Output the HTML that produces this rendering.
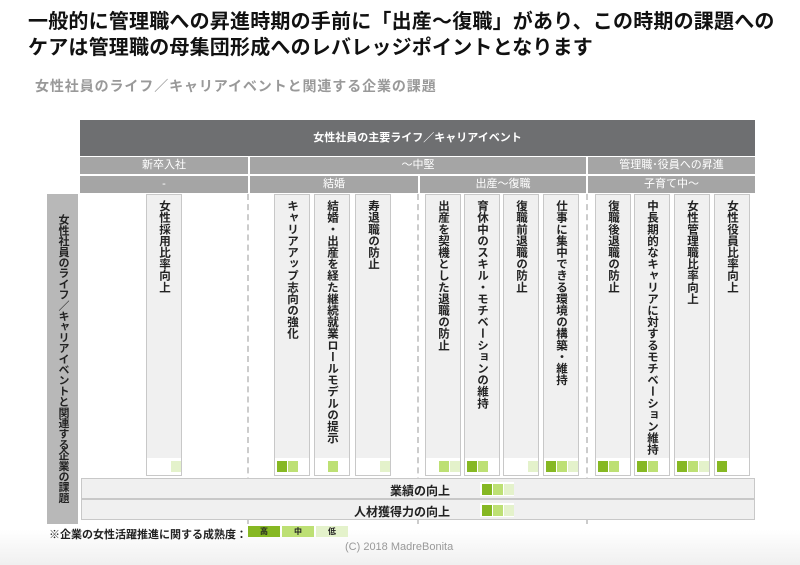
<!DOCTYPE html>
<html><head><meta charset="utf-8">
<style>
*{margin:0;padding:0;box-sizing:border-box}
body{width:800px;height:565px;background:linear-gradient(#fff 0,#fff 530px,#f0f0f0 565px);font-family:"Liberation Sans","Noto Sans CJK JP",sans-serif;position:relative;overflow:hidden}
.a{position:absolute}
.t{left:28px;font-size:20px;font-weight:bold;letter-spacing:0.2px;white-space:nowrap;color:#111;line-height:24px}
.sub{left:35px;top:76px;font-size:14px;font-weight:bold;color:#999;letter-spacing:0.9px;white-space:nowrap}
.hd{background:#6e6f71;color:#fff;font-size:11px;font-weight:bold;text-align:center}
.h2{background:#a5a5a5;color:#fff;font-size:11px;text-align:center;line-height:17px}
.card{top:194px;width:36px;height:282px;border:1px solid #c8c8c8;background:#f0f0f0}
.card .v{writing-mode:vertical-rl;font-size:11.5px;line-height:14px;font-weight:bold;color:#222;position:absolute;top:5px;left:10px;white-space:nowrap;letter-spacing:0.1px}
.card .w{position:absolute;left:0;right:0;bottom:0;height:17px;background:#fff}
.sq{position:absolute;top:3px;width:10px;height:11px}
.h{background:#86b823}.m{background:#bde074}.l{background:#e4f2cb}
.dash{top:194px;height:330px;border-left:2px dashed #ccc}
.bar{left:81px;width:674px;height:21px;background:#f0f0f0;border:1px solid #c8c8c8;font-size:12px;font-weight:bold;color:#222}
</style></head><body>
<div class="a t" style="top:10px">一般的に管理職への昇進時期の手前に「出産～復職」があり、この時期の課題への</div>
<div class="a t" style="top:36px">ケアは管理職の母集団形成へのレバレッジポイントとなります</div>
<div class="a sub">女性社員のライフ／キャリアイベントと関連する企業の課題</div>

<div class="a hd" style="left:80px;top:120px;width:675px;height:36px;line-height:36px">女性社員の主要ライフ／キャリアイベント</div>
<div class="a h2" style="left:80px;top:157px;width:168px">新卒入社</div>
<div class="a h2" style="left:250px;top:157px;width:336px">～中堅</div>
<div class="a h2" style="left:588px;top:157px;width:167px">管理職･役員への昇進</div>
<div class="a h2" style="left:80px;top:176px;width:168px">-</div>
<div class="a h2" style="left:250px;top:176px;width:168px">結婚</div>
<div class="a h2" style="left:420px;top:176px;width:166px">出産～復職</div>
<div class="a h2" style="left:588px;top:176px;width:167px">子育て中～</div>

<div class="a" style="left:47px;top:194px;width:31px;height:330px;background:#b8b8b8"></div>
<div class="a" style="left:56px;top:214px;writing-mode:vertical-rl;font-size:11px;line-height:13px;font-weight:bold;color:#222;white-space:nowrap;letter-spacing:-0.3px">女性社員のライフ／キャリアイベントと関連する企業の課題</div>

<div class="a dash" style="left:247px"></div>
<div class="a dash" style="left:417px"></div>
<div class="a dash" style="left:586px"></div>

<div class="a card" style="left:146px"><div class="v">女性採用比率向上</div><div class="w"><div class="sq l" style="left:24px"></div></div></div>
<div class="a card" style="left:274px"><div class="v">キャリアアップ志向の強化</div><div class="w"><div class="sq h" style="left:2px"></div><div class="sq m" style="left:13px"></div></div></div>
<div class="a card" style="left:314px"><div class="v">結婚・出産を経た継続就業ロールモデルの提示</div><div class="w"><div class="sq m" style="left:13px"></div></div></div>
<div class="a card" style="left:355px"><div class="v">寿退職の防止</div><div class="w"><div class="sq l" style="left:24px"></div></div></div>
<div class="a card" style="left:425px"><div class="v">出産を契機とした退職の防止</div><div class="w"><div class="sq m" style="left:13px"></div><div class="sq l" style="left:24px"></div></div></div>
<div class="a card" style="left:464px"><div class="v">育休中のスキル・モチベーションの維持</div><div class="w"><div class="sq h" style="left:2px"></div><div class="sq m" style="left:13px"></div></div></div>
<div class="a card" style="left:503px"><div class="v">復職前退職の防止</div><div class="w"><div class="sq l" style="left:24px"></div></div></div>
<div class="a card" style="left:543px"><div class="v">仕事に集中できる環境の構築・維持</div><div class="w"><div class="sq h" style="left:2px"></div><div class="sq m" style="left:13px"></div><div class="sq l" style="left:24px"></div></div></div>
<div class="a card" style="left:595px"><div class="v">復職後退職の防止</div><div class="w"><div class="sq h" style="left:2px"></div><div class="sq m" style="left:13px"></div></div></div>
<div class="a card" style="left:634px"><div class="v">中長期的なキャリアに対するモチベーション維持</div><div class="w"><div class="sq h" style="left:2px"></div><div class="sq m" style="left:13px"></div></div></div>
<div class="a card" style="left:674px"><div class="v">女性管理職比率向上</div><div class="w"><div class="sq h" style="left:2px"></div><div class="sq m" style="left:13px"></div><div class="sq l" style="left:24px"></div></div></div>
<div class="a card" style="left:714px"><div class="v">女性役員比率向上</div><div class="w"><div class="sq h" style="left:2px"></div></div></div>

<div class="a bar" style="top:478px"><span class="a" style="right:304px;top:3px">業績の向上</span><div class="a" style="left:398px;top:3px;width:34px;height:14px;background:#fff"></div><div class="sq h a" style="left:400px;top:5px"></div><div class="sq m a" style="left:411px;top:5px"></div><div class="sq l a" style="left:422px;top:5px"></div></div>
<div class="a bar" style="top:499px"><span class="a" style="right:304px;top:3px">人材獲得力の向上</span><div class="a" style="left:398px;top:3px;width:34px;height:14px;background:#fff"></div><div class="sq h a" style="left:400px;top:5px"></div><div class="sq m a" style="left:411px;top:5px"></div><div class="sq l a" style="left:422px;top:5px"></div></div>

<div class="a" style="left:49px;top:526px;font-size:11px;font-weight:bold;color:#222;white-space:nowrap">※企業の女性活躍推進に関する成熟度：</div>
<div class="a h" style="left:248px;top:526px;width:32px;height:11px;font-size:8px;text-align:center;line-height:11px;font-weight:bold;color:#222">高</div>
<div class="a m" style="left:282px;top:526px;width:32px;height:11px;font-size:8px;text-align:center;line-height:11px;font-weight:bold;color:#222">中</div>
<div class="a l" style="left:316px;top:526px;width:32px;height:11px;font-size:8px;text-align:center;line-height:11px;font-weight:bold;color:#222">低</div>
<div class="a" style="left:345px;top:541px;font-size:11px;color:#999;white-space:nowrap">(C) 2018 MadreBonita</div>
</body></html>
